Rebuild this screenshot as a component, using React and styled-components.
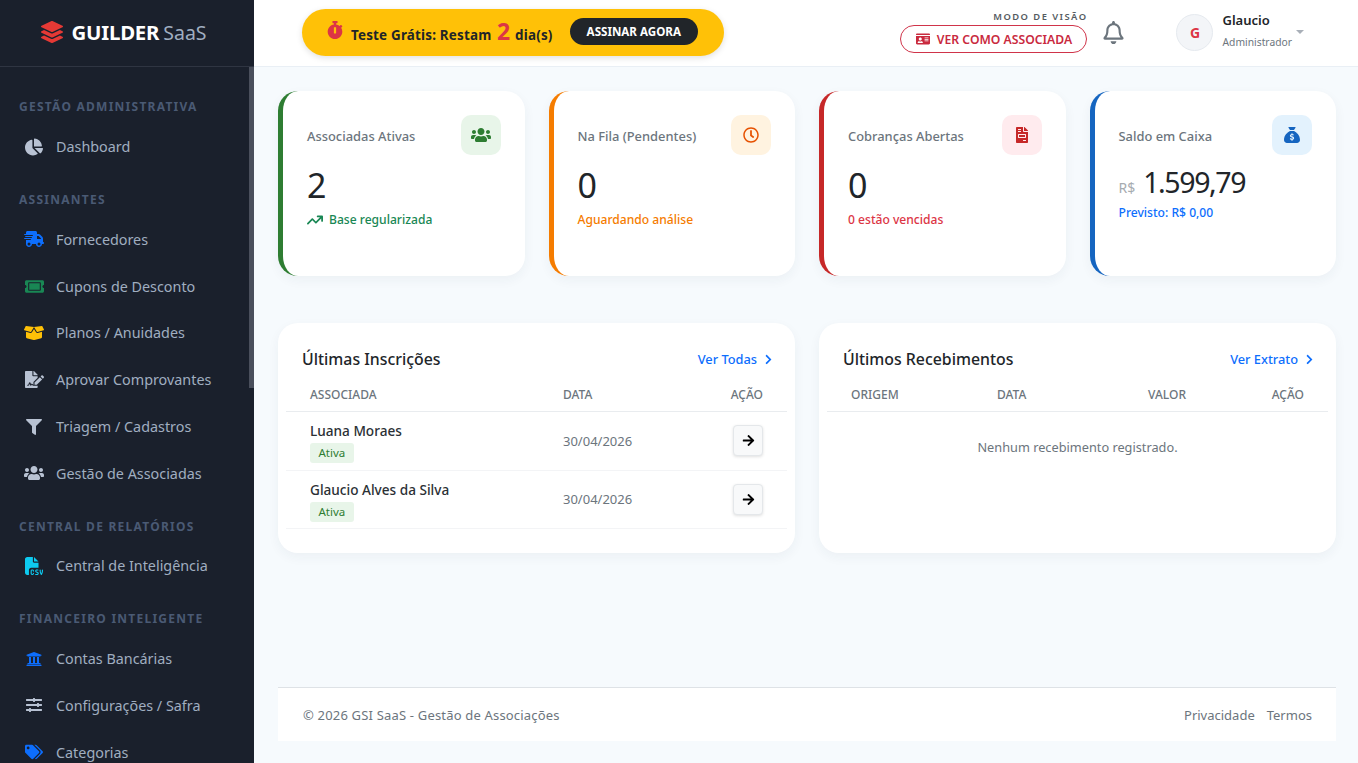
import React from "react";
import styled, { createGlobalStyle } from "styled-components";
import {
  FaArrowRight,
  FaBoxOpen,
  FaChartPie,
  FaChevronRight,
  FaFileInvoice,
  FaFileSignature,
  FaFilter,
  FaIdCard,
  FaLayerGroup,
  FaRegBell,
  FaRegClock,
  FaSlidersH,
  FaStopwatch,
  FaTags,
  FaTicketAlt,
  FaUniversity,
  FaUsers,
} from "react-icons/fa";
import { FaArrowTrendUp, FaFileCsv, FaSackDollar, FaTruckFast } from "react-icons/fa6";

const GlobalStyle = createGlobalStyle`
  * { box-sizing: border-box; }
  html, body { margin: 0; height: 100%; overflow: hidden; }
  body {
    font-family: "Noto Sans", "Open Sans", sans-serif;
    background: #f6fafd;
    color: #212529;
  }
`;

const Layout = styled.div`
  display: flex;
  height: 763px;
`;

const Sidebar = styled.aside`
  position: relative;
  width: 254px;
  flex-shrink: 0;
  display: flex;
  flex-direction: column;
  background: #1a202c;
`;

const ScrollThumb = styled.span`
  position: absolute;
  top: 67px;
  right: 0;
  width: 5px;
  height: 321px;
  background: #4a4f5c;
`;

const Brand = styled.div`
  height: 67px;
  flex-shrink: 0;
  display: flex;
  align-items: center;
  justify-content: center;
  padding: 0 6px 2px 0;
  border-bottom: 1px solid #2f3542;
  svg { color: #e53935; font-size: 22px; margin-right: 8px; }
`;

const BrandName = styled.span`
  color: #fff;
  font-size: 20.4px;
  font-weight: 700;
  letter-spacing: -0.2px;
`;

const BrandSuffix = styled.span`
  color: #a0aec0;
  font-size: 19.5px;
  margin-left: 4px;
`;

const Nav = styled.nav`
  flex: 1;
  overflow: hidden;
`;

const NavSection = styled.div`
  padding: ${(p) => (p.$first ? 32 : 22)}px 19px 0;
  height: ${(p) => (p.$first ? 56.4 : 45.8)}px;
  color: #4a5a74;
  font-size: 12px;
  font-weight: 700;
  letter-spacing: 1.25px;
  line-height: 16px;
  white-space: nowrap;
`;

const NavItem = styled.a`
  display: flex;
  align-items: center;
  height: 46.8px;
  padding-left: 24px;
  color: #a0aec0;
  font-size: 14.35px;
  white-space: nowrap;
`;

const NavIcon = styled.span`
  width: 20px;
  margin-right: 12px;
  flex-shrink: 0;
  display: flex;
  justify-content: center;
  color: ${(p) => p.$color};
  font-size: ${(p) => p.$size}px;
`;

const Main = styled.div`
  flex: 1;
  min-width: 0;
  display: flex;
  flex-direction: column;
`;

const Topbar = styled.header`
  height: 67px;
  flex-shrink: 0;
  display: flex;
  align-items: center;
  padding: 0 0 2px 48px;
  background: #fff;
  border-bottom: 1px solid #e9eff5;
`;

const TrialPill = styled.div`
  width: 422px;
  height: 47px;
  display: flex;
  align-items: center;
  padding-left: 24px;
  border-radius: 24px;
  background: #ffc107;
  box-shadow: 0 2px 6px rgba(0, 0, 0, 0.12);
  white-space: nowrap;
  svg { color: #dc3545; font-size: 18px; margin-right: 7px; margin-top: -4px; }
`;

const TrialText = styled.span`
  font-size: 13.4px;
  font-weight: 700;
  letter-spacing: 0.2px;
`;

const TrialDays = styled.b`
  color: #dc3545;
  font-size: 23px;
  font-weight: 700;
  line-height: 1;
  margin: 0 1px 0 2px;
`;

const SubscribeButton = styled.button`
  margin-left: 17px;
  height: 27px;
  margin-top: -2px;
  padding: 0 17px;
  border: 0;
  border-radius: 14px;
  background: #212529;
  color: #fff;
  font: 700 11.6px "Noto Sans", sans-serif;
`;

const TopRight = styled.div`
  margin-left: auto;
  display: flex;
  align-items: center;
`;

const ViewMode = styled.div`
  display: flex;
  flex-direction: column;
  align-items: flex-end;
  gap: 2px;
`;

const ViewLabel = styled.span`
  color: #555b61;
  font-size: 9.4px;
  font-weight: 600;
  letter-spacing: 1.45px;
  line-height: 12px;
`;

const ViewButton = styled.button`
  height: 28px;
  width: 187px;
  display: flex;
  align-items: center;
  justify-content: center;
  gap: 7px;
  border: 1px solid #d0344a;
  border-radius: 14px;
  background: #fff;
  color: #c92a3e;
  font: 600 12.2px "Noto Sans", sans-serif;
  svg { font-size: 14px; }
`;

const BellButton = styled.span`
  display: flex;
  margin-left: 15px;
  color: #6c757d;
  font-size: 23px;
`;

const Avatar = styled.div`
  width: 37px;
  height: 37px;
  margin-left: 51px;
  display: flex;
  align-items: center;
  justify-content: center;
  border-radius: 50%;
  background: #f3f5f8;
  border: 1px solid #e6eaef;
  color: #dc3545;
  font-size: 14px;
  font-weight: 700;
`;

const UserBlock = styled.div`
  margin: -4px 0 0 9px;
  display: flex;
  flex-direction: column;
  gap: 6px;
`;

const UserName = styled.span`
  font-size: 13px;
  font-weight: 600;
  line-height: 18px;
`;

const UserRole = styled.span`
  color: #6c757d;
  font-size: 10.3px;
  line-height: 14px;
`;

const Caret = styled.span`
  width: 0;
  height: 0;
  margin: 0 54px 0 4px;
  border-left: 4px solid transparent;
  border-right: 4px solid transparent;
  border-top: 4px solid #a9afb8;
`;

const Content = styled.main`
  flex: 1;
  padding: 24px 22px 0 24px;
`;

const StatGrid = styled.section`
  display: grid;
  grid-template-columns: repeat(4, 1fr);
  gap: 24px;
`;

const StatCard = styled.div`
  height: 185px;
  padding: 24px 24px 0;
  background: #fff;
  border-left: 5px solid ${(p) => p.$accent};
  border-radius: 20px;
  box-shadow: 0 4px 12px rgba(30, 50, 80, 0.05);
`;

const StatTop = styled.div`
  display: flex;
  justify-content: space-between;
  align-items: center;
`;

const StatTitle = styled.span`
  padding-top: 2px;
  color: #6c757d;
  font-size: 12.9px;
  font-weight: 500;
`;

const StatIcon = styled.span`
  width: 40px;
  height: 40px;
  display: flex;
  align-items: center;
  justify-content: center;
  border-radius: 10px;
  background: ${(p) => p.$bg};
  color: ${(p) => p.$color};
  font-size: ${(p) => p.$size || 16}px;
`;

const StatValue = styled.div`
  margin-top: 8px;
  font-size: 34px;
  line-height: 44px;
  display: flex;
  align-items: baseline;
  gap: 8px;
`;

const SaldoValue = styled(StatValue)`
  margin-top: 14px;
  font-size: 28.5px;
  line-height: 26px;
  letter-spacing: -1.4px;
`;

const Currency = styled.span`
  color: #a6abb0;
  font-size: 14px;
  letter-spacing: 0;
`;

const StatNote = styled.div`
  margin-top: ${(p) => p.$top ?? 4}px;
  display: flex;
  align-items: center;
  gap: 6px;
  color: ${(p) => p.$color};
  font-size: 12.1px;
  font-weight: 500;
  line-height: 18px;
  svg { font-size: 16px; }
`;

const PanelGrid = styled.section`
  margin-top: 47px;
  display: grid;
  grid-template-columns: 1fr 1fr;
  gap: 24px;
`;

const Panel = styled.div`
  height: 230px;
  padding: 24px 8px 0;
  background: #fff;
  border-radius: 20px;
  box-shadow: 0 4px 12px rgba(30, 50, 80, 0.05);
`;

const PanelHead = styled.div`
  display: flex;
  justify-content: space-between;
  align-items: center;
  padding: 0 13px 0 16px;
  height: 24px;
`;

const PanelTitle = styled.h3`
  margin: 0;
  font-size: 15.85px;
  font-weight: 500;
`;

const PanelLink = styled.a`
  display: flex;
  align-items: center;
  gap: 6px;
  color: #0d6efd;
  font-size: 12.8px;
  font-weight: 500;
  svg { font-size: 11px; }
`;

const TableRow = styled.div`
  display: grid;
  grid-template-columns: ${(p) => p.$columns};
  align-items: center;
  height: ${(p) => p.$height}px;
  padding: 0 24px;
  border-bottom: 1px solid ${(p) => (p.$head ? "#e9ecef" : "#f3f4f6")};
`;

const HeadRow = styled(TableRow)`
  margin-top: 11px;
  padding-bottom: 5px;
  color: #6c757d;
  font-size: 12px;
  font-weight: 500;
`;

const RightCell = styled.span`
  text-align: right;
`;

const MemberCell = styled.div`
  padding-top: 4px;
`;

const MemberName = styled.div`
  font-size: 13.6px;
  font-weight: 500;
  line-height: 18px;
  color: #2b3035;
`;

const StatusBadge = styled.span`
  display: inline-block;
  margin-top: 3px;
  padding: 0 8.5px;
  height: 20px;
  line-height: 20px;
  border-radius: 3px;
  background: #e8f5e9;
  color: #2e7d32;
  font-size: 11.5px;
`;

const DateCell = styled.span`
  color: #6c757d;
  font-size: 13px;
`;

const ArrowButton = styled.button`
  justify-self: end;
  width: 30px;
  height: 31px;
  display: flex;
  align-items: center;
  justify-content: center;
  padding: 0;
  border: 1px solid #e4e7ea;
  border-radius: 4px;
  background: #f8f9fa;
  box-shadow: 0 1px 3px rgba(0, 0, 0, 0.12);
  color: #000;
  font-size: 13px;
`;

const EmptyRow = styled.div`
  padding-top: 26px;
  text-align: center;
  color: #6c757d;
  font-size: 12.75px;
  line-height: 18px;
`;

const Footer = styled.footer`
  height: 54px;
  margin: 0 22px 22px 24px;
  display: flex;
  align-items: center;
  justify-content: space-between;
  padding: 0 24px;
  background: #fff;
  border-top: 1px solid #dee2e6;
  color: #6c757d;
  font-size: 13px;
`;

const FooterText = styled.span`
  margin-left: 1px;
  letter-spacing: 0.18px;
`;

const FooterLinks = styled.div`
  display: flex;
  gap: 12px;
`;

const navGroups = [
  {
    title: "GESTÃO ADMINISTRATIVA",
    first: true,
    items: [{ label: "Dashboard", icon: FaChartPie, color: "#b8c2d3", size: 18 }],
  },
  {
    title: "ASSINANTES",
    items: [
      { label: "Fornecedores", icon: FaTruckFast, color: "#0d6efd", size: 20 },
      { label: "Cupons de Desconto", icon: FaTicketAlt, color: "#198754", size: 19 },
      { label: "Planos / Anuidades", icon: FaBoxOpen, color: "#ffc107", size: 20 },
      { label: "Aprovar Comprovantes", icon: FaFileSignature, color: "#b8c2d3", size: 19 },
      { label: "Triagem / Cadastros", icon: FaFilter, color: "#b8c2d3", size: 16 },
      { label: "Gestão de Associadas", icon: FaUsers, color: "#b8c2d3", size: 20 },
    ],
  },
  {
    title: "CENTRAL DE RELATÓRIOS",
    items: [{ label: "Central de Inteligência", icon: FaFileCsv, color: "#0dcaf0", size: 18 }],
  },
  {
    title: "FINANCEIRO INTELIGENTE",
    items: [
      { label: "Contas Bancárias", icon: FaUniversity, color: "#0d6efd", size: 16 },
      { label: "Configurações / Safra", icon: FaSlidersH, color: "#b8c2d3", size: 16 },
      { label: "Categorias", icon: FaTags, color: "#0d6efd", size: 18 },
    ],
  },
];

const leftColumns = "253px 1fr 60px";
const rightColumns = "146px 1fr 1fr 118px";

export default function App() {
  return (
    <Layout>
      <GlobalStyle />
      <Sidebar>
        <Brand>
          <FaLayerGroup />
          <BrandName>GUILDER</BrandName>
          <BrandSuffix>SaaS</BrandSuffix>
        </Brand>
        <Nav>
          {navGroups.map((group) => (
            <div key={group.title}>
              <NavSection $first={group.first}>{group.title}</NavSection>
              {group.items.map((item) => (
                <NavItem key={item.label}>
                  <NavIcon $color={item.color} $size={item.size}>
                    <item.icon />
                  </NavIcon>
                  {item.label}
                </NavItem>
              ))}
            </div>
          ))}
        </Nav>
        <ScrollThumb />
      </Sidebar>

      <Main>
        <Topbar>
          <TrialPill>
            <FaStopwatch />
            <TrialText>
              Teste Grátis: Restam <TrialDays>2</TrialDays> dia(s)
            </TrialText>
            <SubscribeButton>ASSINAR AGORA</SubscribeButton>
          </TrialPill>
          <TopRight>
            <ViewMode>
              <ViewLabel>MODO DE VISÃO</ViewLabel>
              <ViewButton>
                <FaIdCard />
                VER COMO ASSOCIADA
              </ViewButton>
            </ViewMode>
            <BellButton>
              <FaRegBell />
            </BellButton>
            <Avatar>G</Avatar>
            <UserBlock>
              <UserName>Glaucio</UserName>
              <UserRole>Administrador</UserRole>
            </UserBlock>
            <Caret />
          </TopRight>
        </Topbar>

        <Content>
          <StatGrid>
            <StatCard $accent="#2e7d32">
              <StatTop>
                <StatTitle>Associadas Ativas</StatTitle>
                <StatIcon $bg="#e8f5e9" $color="#2e7d32" $size={20}>
                  <FaUsers />
                </StatIcon>
              </StatTop>
              <StatValue>2</StatValue>
              <StatNote $color="#198754">
                <FaArrowTrendUp />
                Base regularizada
              </StatNote>
            </StatCard>
            <StatCard $accent="#f57c00">
              <StatTop>
                <StatTitle>Na Fila (Pendentes)</StatTitle>
                <StatIcon $bg="#fff3e0" $color="#e65100">
                  <FaRegClock />
                </StatIcon>
              </StatTop>
              <StatValue>0</StatValue>
              <StatNote $color="#f57c00">Aguardando análise</StatNote>
            </StatCard>
            <StatCard $accent="#c62828">
              <StatTop>
                <StatTitle>Cobranças Abertas</StatTitle>
                <StatIcon $bg="#ffebee" $color="#c62828">
                  <FaFileInvoice />
                </StatIcon>
              </StatTop>
              <StatValue>0</StatValue>
              <StatNote $color="#dc3545">0 estão vencidas</StatNote>
            </StatCard>
            <StatCard $accent="#1565c0">
              <StatTop>
                <StatTitle>Saldo em Caixa</StatTitle>
                <StatIcon $bg="#e3f2fd" $color="#1565c0">
                  <FaSackDollar />
                </StatIcon>
              </StatTop>
              <SaldoValue>
                <Currency>R$</Currency>
                1.599,79
              </SaldoValue>
              <StatNote $color="#0d6efd" $top={3}>
                Previsto: R$ 0,00
              </StatNote>
            </StatCard>
          </StatGrid>

          <PanelGrid>
            <Panel>
              <PanelHead>
                <PanelTitle>Últimas Inscrições</PanelTitle>
                <PanelLink>
                  Ver Todas <FaChevronRight />
                </PanelLink>
              </PanelHead>
              <HeadRow $columns={leftColumns} $height={30} $head>
                <span>ASSOCIADA</span>
                <span>DATA</span>
                <RightCell>AÇÃO</RightCell>
              </HeadRow>
              {["Luana Moraes", "Glaucio Alves da Silva"].map((name) => (
                <TableRow key={name} $columns={leftColumns} $height={58.5}>
                  <MemberCell>
                    <MemberName>{name}</MemberName>
                    <StatusBadge>Ativa</StatusBadge>
                  </MemberCell>
                  <DateCell>30/04/2026</DateCell>
                  <ArrowButton>
                    <FaArrowRight />
                  </ArrowButton>
                </TableRow>
              ))}
            </Panel>
            <Panel>
              <PanelHead>
                <PanelTitle>Últimos Recebimentos</PanelTitle>
                <PanelLink>
                  Ver Extrato <FaChevronRight />
                </PanelLink>
              </PanelHead>
              <HeadRow $columns={rightColumns} $height={30} $head>
                <span>ORIGEM</span>
                <span>DATA</span>
                <RightCell>VALOR</RightCell>
                <RightCell>AÇÃO</RightCell>
              </HeadRow>
              <EmptyRow>Nenhum recebimento registrado.</EmptyRow>
            </Panel>
          </PanelGrid>
        </Content>

        <Footer>
          <FooterText>© 2026 GSI SaaS - Gestão de Associações</FooterText>
          <FooterLinks>
            <span>Privacidade</span>
            <span>Termos</span>
          </FooterLinks>
        </Footer>
      </Main>
    </Layout>
  );
}
